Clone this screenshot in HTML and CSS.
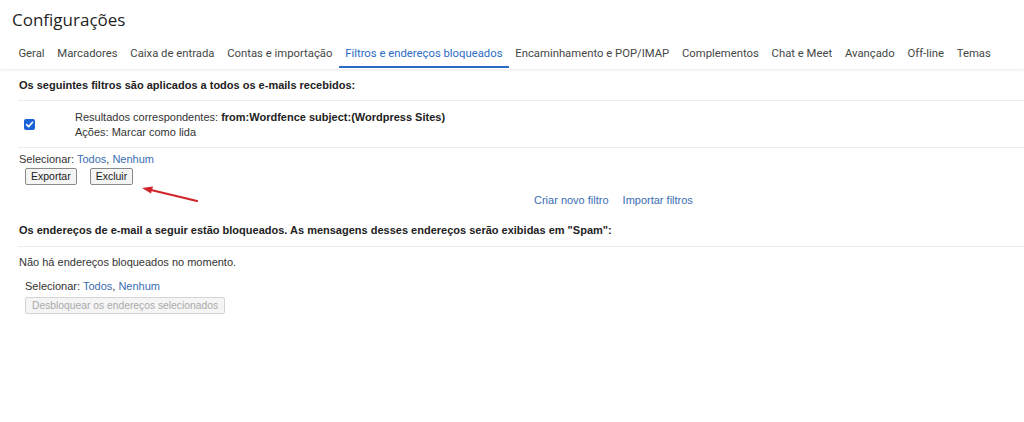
FILE: index.html
```html
<!DOCTYPE html>
<html lang="pt-BR">
<head>
<meta charset="utf-8">
<title>Configurações</title>
<link rel="stylesheet" href="styles.css">
</head>
<body>
<div class="page">
  <h1 class="title">Configurações</h1>
  <nav class="tabs">
    <span class="tab">Geral</span>
    <span class="tab">Marcadores</span>
    <span class="tab">Caixa de entrada</span>
    <span class="tab">Contas e importação</span>
    <span class="tab active">Filtros e endereços bloqueados</span>
    <span class="tab">Encaminhamento e POP/IMAP</span>
    <span class="tab">Complementos</span>
    <span class="tab">Chat e Meet</span>
    <span class="tab">Avançado</span>
    <span class="tab">Off-line</span>
    <span class="tab">Temas</span>
  </nav>
  <main class="content">
    <div class="section-head">Os seguintes filtros são aplicados a todos os e-mails recebidos:</div>
    <div class="filter-row">
      <div class="check-cell">
        <span class="checkbox">
          <svg width="11" height="11" viewBox="0 0 11 11"><rect x="0" y="0" width="11" height="11" rx="2" fill="#1a63d6"/><path d="M2.6 5.6 L4.6 7.6 L8.5 3.3" stroke="#fff" stroke-width="1.6" fill="none" stroke-linecap="round" stroke-linejoin="round"/></svg>
        </span>
      </div>
      <div class="filter-text">
        <div>Resultados correspondentes: <b>from:Wordfence subject:(Wordpress Sites)</b></div>
        <div>Ações: Marcar como lida</div>
      </div>
    </div>
    <div class="select-line">Selecionar: <a class="link">Todos</a>, <a class="link">Nenhum</a></div>
    <div class="btn-row">
      <button class="btn">Exportar</button>
      <button class="btn">Excluir</button>
      <svg class="arrow" width="60" height="20" viewBox="0 0 60 20"><line x1="56" y1="15" x2="8" y2="3.5" stroke="#d1232a" stroke-width="2.2" stroke-linecap="round"/><path d="M1 2 L12 0.5 L10 7.5 Z" fill="#d1232a"/></svg>
    </div>
    <div class="links-row"><a class="link">Criar novo filtro</a><a class="link">Importar filtros</a></div>
    <div class="section-head second">Os endereços de e-mail a seguir estão bloqueados. As mensagens desses endereços serão exibidas em "Spam":</div>
    <div class="empty">Não há endereços bloqueados no momento.</div>
    <div class="select-line second">Selecionar: <a class="link">Todos</a>, <a class="link">Nenhum</a></div>
    <div class="btn-row second">
      <button class="btn disabled" disabled>Desbloquear os endereços selecionados</button>
    </div>
  </main>
</div>
</body>
</html>
```
FILE: styles.css
```css
html, body { margin: 0; padding: 0; background: #fff; }
body { font-family: "Liberation Sans", Arial, sans-serif; color: #222; }
.page { width: 1024px; }
.title {
  margin: 0;
  padding: 8px 0 0 12px;
  height: 24px;
  line-height: 24px;
  font-family: "Open Sans", Roboto, sans-serif;
  font-weight: 400;
  font-size: 17px;
  color: #1f1f1f;
}
.tabs {
  display: flex;
  padding: 10px 0 0 12px;
  height: 27px;
  box-shadow: 0 2px 2px -1px rgba(0,0,0,0.06);
  border-bottom: 1px solid #f3f3f3;
}
.tab {
  font-family: Roboto, "Open Sans", sans-serif;
  font-size: 11.3px;
  color: #444746;
  padding: 5px 6.4px 0;
  height: 23px;
  box-sizing: border-box;
  border-bottom: 2px solid transparent;
  white-space: nowrap;
}
.tab.active { color: #2b6bc4; border-bottom-color: #2b6bc4; height: 26px; }
.content { padding-left: 18px; font-size: 11px; }
.section-head {
  font-weight: bold;
  font-size: 11px;
  line-height: 14px;
  color: #222;
  padding: 8px 0 0 1px;
  height: 22px;
  border-bottom: 1px solid #ececec;
}
.filter-row {
  display: flex;
  height: 46px;
  border-bottom: 1px solid #ececec;
}
.check-cell { width: 57px; padding: 18px 0 0 6px; box-sizing: border-box; }
.checkbox { display: block; width: 11px; height: 11px; line-height: 0; }
.filter-text { padding-top: 9px; line-height: 15px; color: #333; }
.filter-text b { color: #222; }
.select-line { padding: 3px 0 0 1px; height: 16px; line-height: 16px; color: #333; }
.link { color: #3a6db3; text-decoration: none; cursor: pointer; }
.btn-row { position: relative; display: flex; align-items: flex-start; gap: 13px; padding: 1px 0 0 7px; height: 17px; }
.btn {
  font-family: "Liberation Sans", Arial, sans-serif;
  font-size: 10.5px;
  color: #222;
  background: #f4f4f4;
  border: 1px solid #8a8a8a;
  border-radius: 2px;
  height: 17px;
  padding: 0 5px;
  line-height: 15px;
}
.arrow { position: absolute; left: 123px; top: 19px; }
.links-row { display: flex; gap: 14px; padding: 8px 0 0 516px; height: 14px; line-height: 14px; }
.section-head.second { padding-top: 16px; height: 23px; }
.empty { padding: 8px 0 0 1px; height: 14px; line-height: 14px; color: #333; }
.select-line.second { padding: 9px 0 0 7px; }
.btn-row.second { padding-top: 3px; }
.btn.disabled { color: #aaa; border-color: #d4d4d4; background: #f5f5f5; padding: 0 6px; font-size: 10.3px; }
```
